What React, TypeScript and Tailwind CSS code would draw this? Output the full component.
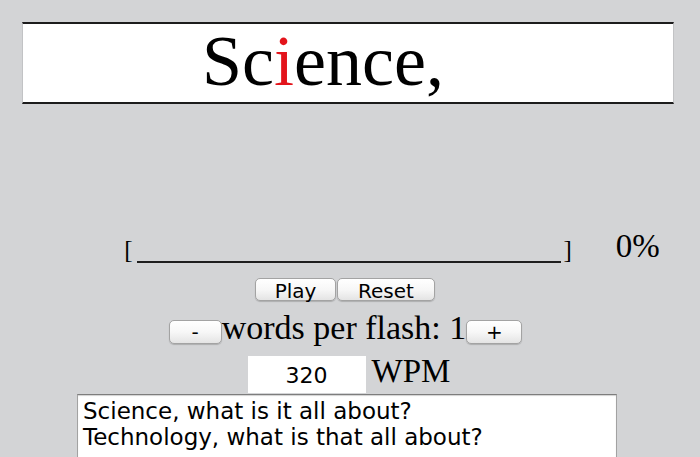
import React from "react";

const serif = "font-['Liberation_Serif','Times_New_Roman',serif]";
const sans = "font-['DejaVu_Sans','Lucida_Grande',sans-serif]";

function AquaButton({ children, className }: { children: React.ReactNode; className?: string }) {
  return (
    <button
      type="button"
      className={`flex items-center justify-center rounded-[5px] border border-[#a3a3a3] bg-linear-to-b from-white via-[#f7f7f7] to-[#e4e4e4] text-black leading-none shadow-[0_1px_1px_rgba(0,0,0,0.18)] ${sans} ${className ?? ""}`}
    >
      {children}
    </button>
  );
}

export default function App() {
  return (
    <div className="h-[457px] w-full overflow-hidden bg-[#d3d4d6]">
      <div className="ml-[22px] flex w-[652px] flex-col pt-[22px]">
        {/* flashed word */}
        <div className="h-[82px] border-x border-y-2 border-x-[#c2c3c5] border-y-[#1c1c1c] bg-white pl-[179px] pt-[1px]">
          <p className={`${serif} text-[72px] leading-none text-black`}>
            Sc<span className="text-[#e3141b]">i</span>ence,
          </p>
        </div>

        {/* progress */}
        <div className="mt-[126px] grid grid-cols-[1fr_auto_1fr] items-end">
          <div />
          <div className="flex items-end">
            <span className={`${serif} mb-[1px] text-[25px] leading-none text-black`}>[</span>
            <div className="ml-[4px] mr-[3px] h-[2px] w-[424px] bg-[#1e1e1e]" />
            <span className={`${serif} mb-[1px] text-[25px] leading-none text-black`}>]</span>
          </div>
          <span className={`${serif} pl-[44px] text-[33px] leading-none text-black`}>0%</span>
        </div>

        {/* play / reset */}
        <div className="mt-[15px] flex justify-center pr-[6px]">
          <AquaButton className="h-[23px] w-[81px] pt-[2px] text-[20px]">Play</AquaButton>
          <AquaButton className="ml-px h-[23px] w-[98px] pt-[2px] text-[20px]">Reset</AquaButton>
        </div>

        {/* words per flash */}
        <div className="mt-[10px] flex items-end justify-center pr-[5px]">
          <AquaButton className="mb-px h-[24px] w-[53px] text-[20px]">-</AquaButton>
          <span className={`${serif} text-[34px] leading-none text-black`}>words per flash: 1</span>
          <AquaButton className="mb-px h-[24px] w-[56px] text-[20px]">+</AquaButton>
        </div>

        {/* speed */}
        <div className="mt-[10px] flex items-end justify-center pl-[2px]">
          <input
            type="text"
            defaultValue="320"
            className={`${sans} h-[37px] w-[118px] bg-white pt-[2px] text-center text-[22px] text-black outline-none`}
          />
          <span className={`${serif} mb-[5px] ml-[6px] text-[33px] leading-none text-black`}>WPM</span>
        </div>

        {/* source text */}
        <textarea
          defaultValue={"Science, what is it all about?\nTechnology, what is that all about?"}
          className={`${sans} ml-[55px] mt-px h-[120px] w-[540px] resize-none overflow-hidden border border-[#a2a2a2] border-t-[#7d7d7d] bg-white px-[5px] pt-[3px] text-[23px] leading-[26px] text-black shadow-[inset_0_1px_1px_rgba(0,0,0,0.18)] outline-none`}
        />
      </div>
    </div>
  );
}
